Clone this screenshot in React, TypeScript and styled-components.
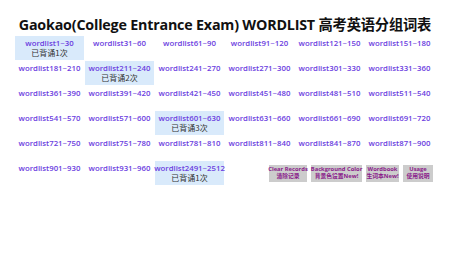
import styled, { createGlobalStyle } from "styled-components";

const GlobalStyle = createGlobalStyle`
  html, body {
    margin: 0;
    padding: 0;
    background: #ffffff;
  }
  body {
    font-family: "Open Sans", "Noto Sans CJK SC", sans-serif;
  }
`;

const Page = styled.div`
  width: 450px;
  height: 253px;
  box-sizing: border-box;
  padding: 16px 15px 0 15px;
`;

const Title = styled.h1`
  margin: 0 0 2px 0;
  font-family: "Open Sans", "Noto Sans CJK SC", sans-serif;
  font-size: 14.3px;
  font-weight: 700;
  line-height: 18px;
  color: #111111;
  text-align: center;
  white-space: nowrap;
  letter-spacing: -0.2px;
`;

const Grid = styled.div`
  display: flex;
  flex-wrap: wrap;
  align-items: center;
  column-gap: 1px;
  row-gap: 1px;
  width: 420px;
`;

const Cell = styled.a<{ $done: boolean }>`
  display: flex;
  flex-direction: column;
  align-items: center;
  box-sizing: border-box;
  width: 69px;
  height: 24px;
  padding-top: 2px;
  background: ${(p) => (p.$done ? "#d9eafb" : "transparent")};
  text-decoration: none;
  cursor: pointer;
`;

const CellName = styled.span`
  font-size: 7.8px;
  font-weight: 600;
  line-height: 10px;
  color: #6b3de0;
  white-space: nowrap;
`;

const CellCount = styled.span`
  font-family: "Noto Sans CJK SC", sans-serif;
  font-size: 8px;
  line-height: 10px;
  color: #333333;
`;

const ButtonBar = styled.div`
  display: flex;
  gap: 4px;
  margin-left: auto;
  margin-right: 2px;
`;

const ToolButton = styled.button<{ $w: number }>`
  display: flex;
  flex-direction: column;
  align-items: center;
  justify-content: center;
  width: ${(p) => p.$w}px;
  height: 17px;
  padding: 0;
  border: none;
  background: #cccccc;
  color: #8a1a8a;
  font-family: "Open Sans", "Noto Sans CJK SC", sans-serif;
  font-size: 5.8px;
  font-weight: 700;
  line-height: 7px;
  white-space: nowrap;
  cursor: pointer;
`;

const lists: [string, number][] = [
  ["1~30", 1], ["31~60", 0], ["61~90", 0], ["91~120", 0], ["121~150", 0], ["151~180", 0],
  ["181~210", 0], ["211~240", 2], ["241~270", 0], ["271~300", 0], ["301~330", 0], ["331~360", 0],
  ["361~390", 0], ["391~420", 0], ["421~450", 0], ["451~480", 0], ["481~510", 0], ["511~540", 0],
  ["541~570", 0], ["571~600", 0], ["601~630", 3], ["631~660", 0], ["661~690", 0], ["691~720", 0],
  ["721~750", 0], ["751~780", 0], ["781~810", 0], ["811~840", 0], ["841~870", 0], ["871~900", 0],
  ["901~930", 0], ["931~960", 0], ["2491~2512", 1],
];

const buttons: [string, string, number][] = [
  ["Clear Records", "清除记录", 38],
  ["Background Color", "背景色设置New!", 51],
  ["Wordbook", "生词本New!", 33],
  ["Usage", "使用说明", 30],
];

export default function App() {
  return (
    <>
      <GlobalStyle />
      <Page>
        <Title>Gaokao(College Entrance Exam) WORDLIST 高考英语分组词表</Title>
        <Grid>
          {lists.map(([range, count]) => (
            <Cell key={range} $done={count > 0}>
              <CellName>wordlist{range}</CellName>
              {count > 0 && <CellCount>已背诵{count}次</CellCount>}
            </Cell>
          ))}
          <ButtonBar>
            {buttons.map(([en, zh, w]) => (
              <ToolButton key={en} $w={w}>
                <span>{en}</span>
                <span>{zh}</span>
              </ToolButton>
            ))}
          </ButtonBar>
        </Grid>
      </Page>
    </>
  );
}
